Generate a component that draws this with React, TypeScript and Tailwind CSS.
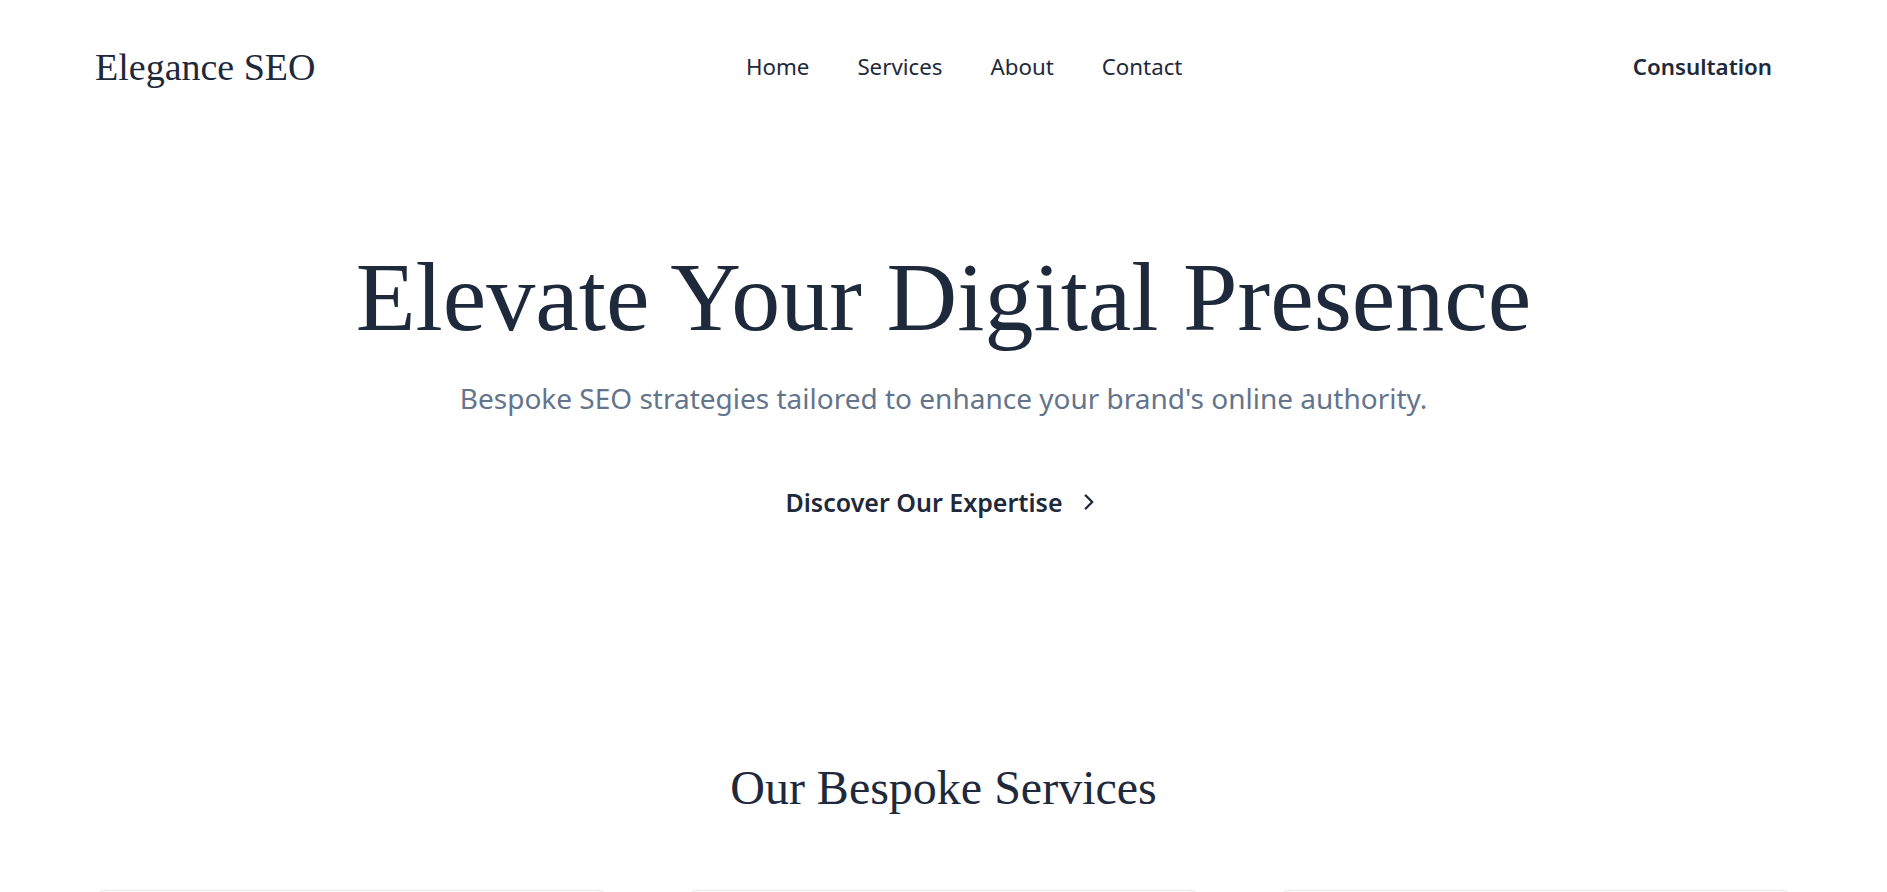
import React from "react";
import { ChevronRight, Search, BarChart3, PenTool } from "lucide-react";

const serif = "font-['Liberation_Serif','Times_New_Roman',serif]";
const sans = "font-['Noto_Sans','Open_Sans',sans-serif]";

function Header() {
  return (
    <header className="flex h-[134px] items-center justify-between px-[95px]">
      <a href="#" className={`${serif} text-[38px] leading-[43px] text-[#1e293b]`}>
        Elegance SEO
      </a>
      <nav className={`${sans} flex items-center gap-[48px] text-[22.3px] text-[#1e293b]`}>
        <a href="#">Home</a>
        <a href="#">Services</a>
        <a href="#">About</a>
        <a href="#">Contact</a>
      </nav>
      <button className={`${sans} px-[20px] py-[10px] text-[22.3px] font-semibold text-[#1e293b]`}>
        Consultation
      </button>
    </header>
  );
}

function Hero() {
  return (
    <section className="flex flex-col items-center pt-[114px] text-center">
      <h1 className={`${serif} text-[98px] leading-none text-[#1e293b]`}>
        Elevate Your Digital Presence
      </h1>
      <p className={`${sans} mt-[32px] text-[28px] leading-[40px] text-[#64748b]`}>
        Bespoke SEO strategies tailored to enhance your brand's online authority.
      </p>
      <button
        className={`${sans} mt-[68px] flex items-center gap-[13px] text-[25px] font-semibold leading-[32px] text-[#1e293b]`}
      >
        Discover Our Expertise
        <ChevronRight size={26} strokeWidth={2.2} />
      </button>
    </section>
  );
}

const services = [
  {
    icon: Search,
    title: "Keyword Research",
    text: "In-depth analysis to uncover the search terms your discerning audience uses.",
  },
  {
    icon: PenTool,
    title: "Content Strategy",
    text: "Refined, purposeful content crafted to engage readers and search engines alike.",
  },
  {
    icon: BarChart3,
    title: "Performance Analytics",
    text: "Transparent reporting that measures growth and informs every next step.",
  },
];

function Services() {
  return (
    <section className="pt-[242px] pb-[96px]">
      <h2 className={`${serif} text-center text-[48px] leading-[56px] text-[#1e293b]`}>
        Our Bespoke Services
      </h2>
      <div className="mt-[74px] grid grid-cols-3 gap-[79px] px-[95px]">
        {services.map((s) => (
          <div
            key={s.title}
            className="rounded-[10px] border border-[#e5e7eb] bg-white p-[38px] shadow-sm"
          >
            <s.icon size={38} strokeWidth={1.5} className="text-[#1e293b]" />
            <h3 className={`${serif} mt-[24px] text-[29px] text-[#1e293b]`}>{s.title}</h3>
            <p className={`${sans} mt-[12px] text-[19px] leading-[30px] text-[#64748b]`}>
              {s.text}
            </p>
          </div>
        ))}
      </div>
    </section>
  );
}

export default function App() {
  return (
    <div className="min-h-screen bg-white">
      <Header />
      <Hero />
      <Services />
    </div>
  );
}
